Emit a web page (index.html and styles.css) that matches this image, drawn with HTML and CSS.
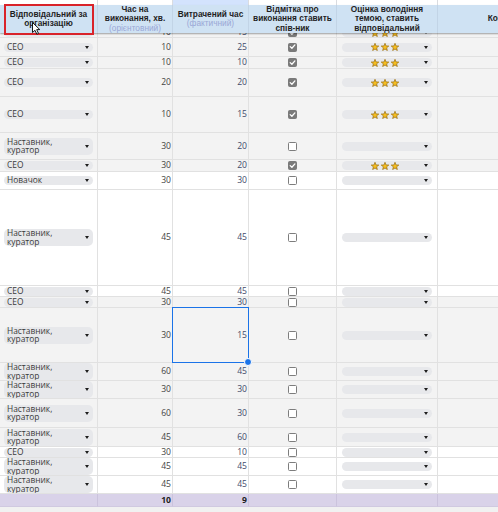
FILE: index.html
```html
<!DOCTYPE html>
<html lang="uk">
<head>
<meta charset="utf-8">
<title>Sheet</title>
<link rel="stylesheet" href="styles.css">
</head>
<body>
<svg width="0" height="0" class="defs">
  <defs>
    <symbol id="star" viewBox="0 0 8 8">
      <polygon points="4,0.3 5,2.93 7.8,3.06 5.62,4.83 6.35,7.54 4,6 1.65,7.54 2.38,4.83 0.2,3.06 3,2.93" fill="#f5bd1f" stroke="#9a6d0c" stroke-width="0.7" stroke-linejoin="round"/>
    </symbol>
    <symbol id="tick" viewBox="0 0 9 9">
      <path d="M2.2 4.6 L3.9 6.2 L6.9 2.9" fill="none" stroke="#fff" stroke-width="1.3" stroke-linecap="round" stroke-linejoin="round"/>
    </symbol>
  </defs>
</svg>
<div class="viewport">
<div class="sheet">

  <div class="row strip">
    <div class="cell"></div><div class="cell"></div><div class="cell hl"></div><div class="cell"></div><div class="cell"></div><div class="cell"></div>
  </div>

  <div class="row head">
    <div class="cell first"><span class="ht">Відповідальний за<br>організацію</span>
      <span class="redbox"></span>
      <svg class="cursor" width="9" height="13" viewBox="0 0 9 13"><path d="M0.5 0.5 L0.5 10.5 L3 8.3 L4.8 12.2 L6.5 11.4 L4.7 7.6 L7.8 7.6 Z" fill="#fff" stroke="#000" stroke-width="0.9" stroke-linejoin="round"/></svg>
    </div>
    <div class="cell"><span class="ht">Час на<br>виконання, хв.<br><span class="sub">(орієнтовний)</span></span></div>
    <div class="cell"><span class="ht">Витрачений час<br><span class="sub">(фактичний)</span></span></div>
    <div class="cell"><span class="ht">Відмітка про<br>виконання ставить<br>спів-ник</span></div>
    <div class="cell"><span class="ht">Оцінка володіння<br>темою, ставить<br>відповідальний</span></div>
    <div class="cell"><span class="ht">Коментар</span></div>
  </div>

  <div class="row gray h5 clip">
    <div class="cell own"><span class="chip"><span class="chip-t">CEO</span><i class="caret"></i></span></div>
    <div class="cell num">10</div>
    <div class="cell num fact">15</div>
    <div class="cell chk"><span class="cb on"><svg><use href="#tick"/></svg></span></div>
    <div class="cell rate"><span class="chip"><span class="stars"><svg><use href="#star"/></svg><svg><use href="#star"/></svg><svg><use href="#star"/></svg></span><i class="caret"></i></span></div>
    <div class="cell"></div>
  </div>

  <div class="row gray h19">
    <div class="cell own"><span class="chip"><span class="chip-t">CEO</span><i class="caret"></i></span></div>
    <div class="cell num">10</div>
    <div class="cell num fact">25</div>
    <div class="cell chk"><span class="cb on"><svg><use href="#tick"/></svg></span></div>
    <div class="cell rate"><span class="chip"><span class="stars"><svg><use href="#star"/></svg><svg><use href="#star"/></svg><svg><use href="#star"/></svg></span><i class="caret"></i></span></div>
    <div class="cell"></div>
  </div>

  <div class="row gray h12">
    <div class="cell own"><span class="chip"><span class="chip-t">CEO</span><i class="caret"></i></span></div>
    <div class="cell num">10</div>
    <div class="cell num fact">10</div>
    <div class="cell chk"><span class="cb on"><svg><use href="#tick"/></svg></span></div>
    <div class="cell rate"><span class="chip"><span class="stars"><svg><use href="#star"/></svg><svg><use href="#star"/></svg><svg><use href="#star"/></svg></span><i class="caret"></i></span></div>
    <div class="cell"></div>
  </div>

  <div class="row gray h28">
    <div class="cell own"><span class="chip"><span class="chip-t">CEO</span><i class="caret"></i></span></div>
    <div class="cell num">20</div>
    <div class="cell num fact">20</div>
    <div class="cell chk"><span class="cb on"><svg><use href="#tick"/></svg></span></div>
    <div class="cell rate"><span class="chip"><span class="stars"><svg><use href="#star"/></svg><svg><use href="#star"/></svg><svg><use href="#star"/></svg></span><i class="caret"></i></span></div>
    <div class="cell"></div>
  </div>

  <div class="row gray h36">
    <div class="cell own"><span class="chip"><span class="chip-t">CEO</span><i class="caret"></i></span></div>
    <div class="cell num">10</div>
    <div class="cell num fact">15</div>
    <div class="cell chk"><span class="cb on"><svg><use href="#tick"/></svg></span></div>
    <div class="cell rate"><span class="chip"><span class="stars"><svg><use href="#star"/></svg><svg><use href="#star"/></svg><svg><use href="#star"/></svg></span><i class="caret"></i></span></div>
    <div class="cell"></div>
  </div>

  <div class="row gray h27">
    <div class="cell own"><span class="chip"><span class="chip-t">Наставник,<br>куратор</span><i class="caret"></i></span></div>
    <div class="cell num">30</div>
    <div class="cell num fact">20</div>
    <div class="cell chk"><span class="cb"></span></div>
    <div class="cell rate"><span class="chip"><span class="chip-t"></span><i class="caret"></i></span></div>
    <div class="cell"></div>
  </div>

  <div class="row gray h12">
    <div class="cell own"><span class="chip"><span class="chip-t">CEO</span><i class="caret"></i></span></div>
    <div class="cell num">30</div>
    <div class="cell num fact">20</div>
    <div class="cell chk"><span class="cb on"><svg><use href="#tick"/></svg></span></div>
    <div class="cell rate"><span class="chip"><span class="stars"><svg><use href="#star"/></svg><svg><use href="#star"/></svg><svg><use href="#star"/></svg></span><i class="caret"></i></span></div>
    <div class="cell"></div>
  </div>

  <div class="row white h18">
    <div class="cell own"><span class="chip"><span class="chip-t">Новачок</span><i class="caret"></i></span></div>
    <div class="cell num">30</div>
    <div class="cell num fact">30</div>
    <div class="cell chk"><span class="cb"></span></div>
    <div class="cell rate"><span class="chip"><span class="chip-t"></span><i class="caret"></i></span></div>
    <div class="cell"></div>
  </div>

  <div class="row white h96">
    <div class="cell own"><span class="chip"><span class="chip-t">Наставник,<br>куратор</span><i class="caret"></i></span></div>
    <div class="cell num">45</div>
    <div class="cell num fact">45</div>
    <div class="cell chk"><span class="cb"></span></div>
    <div class="cell rate"><span class="chip"><span class="chip-t"></span><i class="caret"></i></span></div>
    <div class="cell"></div>
  </div>

  <div class="row white h11">
    <div class="cell own"><span class="chip"><span class="chip-t">CEO</span><i class="caret"></i></span></div>
    <div class="cell num">45</div>
    <div class="cell num fact">45</div>
    <div class="cell chk"><span class="cb"></span></div>
    <div class="cell rate"><span class="chip"><span class="chip-t"></span><i class="caret"></i></span></div>
    <div class="cell"></div>
  </div>

  <div class="row gray h11">
    <div class="cell own"><span class="chip"><span class="chip-t">CEO</span><i class="caret"></i></span></div>
    <div class="cell num">30</div>
    <div class="cell num fact">30</div>
    <div class="cell chk"><span class="cb"></span></div>
    <div class="cell rate"><span class="chip"><span class="chip-t"></span><i class="caret"></i></span></div>
    <div class="cell"></div>
  </div>

  <div class="row gray h55">
    <div class="cell own"><span class="chip"><span class="chip-t">Наставник,<br>куратор</span><i class="caret"></i></span></div>
    <div class="cell num">30</div>
    <div class="cell num fact sel">15</div>
    <div class="cell chk"><span class="cb"></span></div>
    <div class="cell rate"><span class="chip"><span class="chip-t"></span><i class="caret"></i></span></div>
    <div class="cell"></div>
  </div>

  <div class="row gray h18">
    <div class="cell own"><span class="chip"><span class="chip-t">Наставник,<br>куратор</span><i class="caret"></i></span></div>
    <div class="cell num">60</div>
    <div class="cell num fact">45</div>
    <div class="cell chk"><span class="cb"></span></div>
    <div class="cell rate"><span class="chip"><span class="chip-t"></span><i class="caret"></i></span></div>
    <div class="cell"></div>
  </div>

  <div class="row gray h18">
    <div class="cell own"><span class="chip"><span class="chip-t">Наставник,<br>куратор</span><i class="caret"></i></span></div>
    <div class="cell num">30</div>
    <div class="cell num fact">30</div>
    <div class="cell chk"><span class="cb"></span></div>
    <div class="cell rate"><span class="chip"><span class="chip-t"></span><i class="caret"></i></span></div>
    <div class="cell"></div>
  </div>

  <div class="row gray h29">
    <div class="cell own"><span class="chip"><span class="chip-t">Наставник,<br>куратор</span><i class="caret"></i></span></div>
    <div class="cell num">60</div>
    <div class="cell num fact">30</div>
    <div class="cell chk"><span class="cb"></span></div>
    <div class="cell rate"><span class="chip"><span class="chip-t"></span><i class="caret"></i></span></div>
    <div class="cell"></div>
  </div>

  <div class="row gray h19">
    <div class="cell own"><span class="chip"><span class="chip-t">Наставник,<br>куратор</span><i class="caret"></i></span></div>
    <div class="cell num">45</div>
    <div class="cell num fact">60</div>
    <div class="cell chk"><span class="cb"></span></div>
    <div class="cell rate"><span class="chip"><span class="chip-t"></span><i class="caret"></i></span></div>
    <div class="cell"></div>
  </div>

  <div class="row white h11">
    <div class="cell own"><span class="chip"><span class="chip-t">CEO</span><i class="caret"></i></span></div>
    <div class="cell num">30</div>
    <div class="cell num fact">10</div>
    <div class="cell chk"><span class="cb"></span></div>
    <div class="cell rate"><span class="chip"><span class="chip-t"></span><i class="caret"></i></span></div>
    <div class="cell"></div>
  </div>

  <div class="row white h18">
    <div class="cell own"><span class="chip"><span class="chip-t">Наставник,<br>куратор</span><i class="caret"></i></span></div>
    <div class="cell num">45</div>
    <div class="cell num fact">45</div>
    <div class="cell chk"><span class="cb"></span></div>
    <div class="cell rate"><span class="chip"><span class="chip-t"></span><i class="caret"></i></span></div>
    <div class="cell"></div>
  </div>

  <div class="row white h18">
    <div class="cell own"><span class="chip"><span class="chip-t">Наставник,<br>куратор</span><i class="caret"></i></span></div>
    <div class="cell num">45</div>
    <div class="cell num fact">45</div>
    <div class="cell chk"><span class="cb"></span></div>
    <div class="cell rate"><span class="chip"><span class="chip-t"></span><i class="caret"></i></span></div>
    <div class="cell"></div>
  </div>

  <div class="row total h13">
    <div class="cell"></div>
    <div class="cell num">10</div>
    <div class="cell num">9</div>
    <div class="cell"></div>
    <div class="cell"></div>
    <div class="cell"></div>
  </div>

</div>
</div>
</body>
</html>
```

FILE: styles.css
```css
* { box-sizing: border-box; }

html, body {
  margin: 0;
  padding: 0;
}

body {
  background: #f1f1f1;
  font-family: "Open Sans", "Noto Sans", sans-serif;
  overflow: hidden;
  color: #3c3c3c;
}

.defs {
  position: absolute;
  width: 0;
  height: 0;
}

.viewport {
  width: 498px;
  height: 512px;
  overflow: hidden;
}

.sheet {
  width: 578px;
}

.row {
  display: grid;
  grid-template-columns: 98px 75px 76px 88px 101px 140px;
}

.row > .cell {
  border-right: 1px solid #e1e1e1;
  border-bottom: 1px solid #e1e1e1;
  display: flex;
  align-items: center;
  overflow: hidden;
  min-width: 0;
  font-size: 8.6px;
  line-height: 9px;
}

.gray { background: #f3f3f3; }
.white { background: #ffffff; }

.h5 { height: 5px; }
.h11 { height: 11px; }
.h12 { height: 12px; }
.h13 { height: 13px; }
.h18 { height: 18px; }
.h19 { height: 19px; }
.h27 { height: 27px; }
.h28 { height: 28px; }
.h29 { height: 29px; }
.h36 { height: 36px; }
.h55 { height: 55px; }
.h96 { height: 96px; }

/* column letters strip */
.strip { height: 5px; background: #ffffff; }
.strip > .cell { border-bottom: none; border-right-color: #dadce0; }
.strip > .cell.hl { background: #d3e3fd; }

/* header */
.head {
  height: 28px;
  background: #cfe2f3;
  position: relative;
  z-index: 2;
  box-shadow: 0 1px 1.5px rgba(0, 0, 0, 0.35);
}

.head > .cell {
  justify-content: center;
  text-align: center;
  font-family: "Liberation Sans", Arial, sans-serif;
  font-weight: bold;
  font-size: 8.3px;
  line-height: 9.4px;
  color: #1f1f1f;
  border-right-color: #c2d4e6;
  border-bottom: none;
  overflow: visible;
}

.head .ht {
  display: block;
  white-space: nowrap;
}

.head > .cell.first { position: relative; }

.head .sub {
  font-weight: normal;
  color: #9aa7d6;
}

.redbox {
  position: absolute;
  left: 4px;
  top: -1px;
  width: 90px;
  height: 31px;
  border: 2px solid #d9232a;
}

.cursor {
  position: absolute;
  left: 32px;
  top: 17px;
  z-index: 3;
}

/* hidden (scrolled under header) row */
.clip > .cell { align-items: flex-end; }

/* owner dropdown */
.own { padding: 0 4px 0 4px; }
.rate { padding: 0 5px 0 5px; }

.chip {
  display: flex;
  align-items: center;
  width: 100%;
  min-height: 9px;
  background: #e7e8eb;
  border-radius: 5px;
  padding: 0 4px 0 3px;
}

.chip-t {
  flex: 1;
  line-height: 8.5px;
  font-size: 8.4px;
  color: #3a3a3a;
}

.caret {
  width: 0;
  height: 0;
  border-left: 2.5px solid transparent;
  border-right: 2.5px solid transparent;
  border-top: 3px solid #1e1e1e;
}

.stars {
  flex: 1;
  display: flex;
  justify-content: center;
  gap: 2px;
  height: 9px;
  align-items: center;
}

.stars svg {
  width: 8px;
  height: 8px;
}

/* numbers */
.num {
  justify-content: flex-end;
  padding-right: 1px;
  color: #444;
}

.fact { color: #3f4b6b; }

.sel {
  position: relative;
  overflow: visible !important;
  z-index: 1;
}

.sel::before {
  content: "";
  position: absolute;
  left: -1px;
  top: -1px;
  right: -1px;
  bottom: -1px;
  border: 1px solid #1a73e8;
}

.sel::after {
  content: "";
  position: absolute;
  right: -4px;
  bottom: -4px;
  width: 6px;
  height: 6px;
  border-radius: 50%;
  background: #1a73e8;
  border: 1px solid #fff;
}

/* checkboxes */
.chk { justify-content: center; }

.cb {
  width: 9px;
  height: 9px;
  border: 1.5px solid #7d7d7d;
  border-radius: 1.5px;
  background: #fff;
  display: flex;
}

.cb.on {
  background: #7a7a7a;
  border-color: #7a7a7a;
}

.cb svg {
  width: 9px;
  height: 9px;
  margin: -1.5px;
}

/* totals */
.total { background: #d9d2e9; }
.total > .cell {
  border-right-color: #cbc3dd;
  border-bottom-color: #d0c9e0;
  font-weight: bold;
  color: #1f1f1f;
}
```
